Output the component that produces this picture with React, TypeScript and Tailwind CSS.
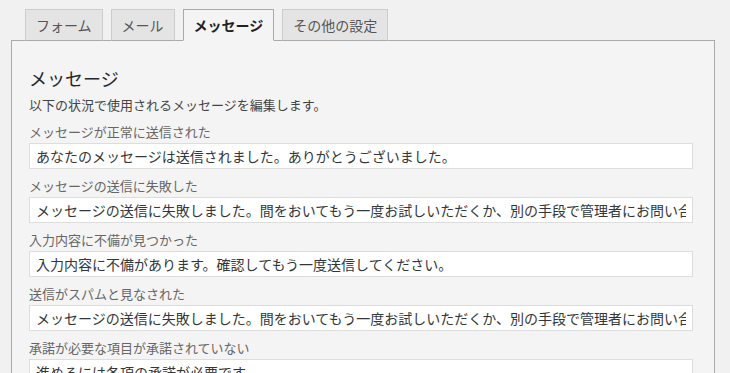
import React from "react";

const tabs = ["フォーム", "メール", "メッセージ", "その他の設定"];

const fail =
  "メッセージの送信に失敗しました。間をおいてもう一度お試しいただくか、別の手段で管理者にお問い合わせください。";

const messages = [
  { label: "メッセージが正常に送信された", value: "あなたのメッセージは送信されました。ありがとうございました。" },
  { label: "メッセージの送信に失敗した", value: fail },
  { label: "入力内容に不備が見つかった", value: "入力内容に不備があります。確認してもう一度送信してください。" },
  { label: "送信がスパムと見なされた", value: fail },
  { label: "承諾が必要な項目が承諾されていない", value: "進めるには各項の承諾が必要です。" },
];

export default function App() {
  return (
    <div
      className="min-h-screen bg-[#f1f1f1] overflow-hidden"
      style={{ fontFamily: '"Noto Sans CJK JP", "Noto Sans", sans-serif' }}
    >
      <div className="ml-[11px] w-[704px]">
        {/* Tabs */}
        <div className="flex gap-2 pt-[9px] pl-[14px] border-b border-[#aaa]">
          {tabs.map((t, i) => {
            const active = i === 2;
            return (
              <div
                key={t}
                className={
                  active
                    ? "-mb-px h-[32px] px-[10px] flex items-center border border-[#aaa] border-b-[#f4f4f4] bg-[#f4f4f4] text-[14px] font-bold text-[#222]"
                    : "-mb-px h-[32px] px-[10px] flex items-center border border-[#ccc] border-b-[#aaa] bg-[#e4e4e4] text-[14px] text-[#555]"
                }
              >
                {t}
              </div>
            );
          })}
        </div>

        {/* Panel */}
        <div className="bg-[#f4f4f4] border-x border-b border-[#aaa] pl-[17px] pt-[25px] pb-6">
          <h2 className="text-[18px] leading-[24px] text-[#23282d]">メッセージ</h2>
          <p className="mt-[6px] text-[13px] leading-[18px] text-[#444]">
            以下の状況で使用されるメッセージを編集します。
          </p>
          <div className="mt-[9px] flex flex-col gap-[8px]">
            {messages.map((m) => (
              <label key={m.label} className="flex flex-col gap-[2px]">
                <span className="text-[13px] leading-[18px] text-[#666]">{m.label}</span>
                <input
                  readOnly
                  value={m.value}
                  className="w-[664px] h-[26px] px-[6px] bg-white border border-[#ddd] text-[14px] text-[#32373c] outline-none"
                  style={{ fontFamily: '"Noto Sans CJK JP", "Noto Sans", sans-serif' }}
                />
              </label>
            ))}
          </div>
        </div>
      </div>
    </div>
  );
}
